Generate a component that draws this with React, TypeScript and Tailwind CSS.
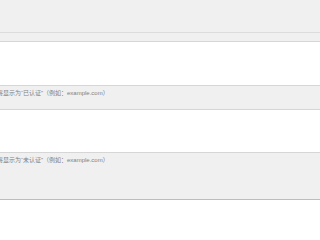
import React from 'react';

const hintFont = { fontFamily: '"Liberation Sans", "Noto Sans CJK SC", sans-serif' };

const Hint: React.FC<{ text: string }> = ({ text }) => (
  <p className="ml-[-3px] whitespace-nowrap pt-[3px] text-[6px] leading-[8px] text-[#808080]" style={hintFont}>
    {text}
  </p>
);

const App: React.FC = () => {
  return (
    <div className="flex h-[200px] w-full flex-col overflow-hidden bg-[#f0f0f0]">
      {/* top bar */}
      <div className="h-[32px] shrink-0" />
      <div className="h-[9px] shrink-0 border-t border-[#dcdcdc]" />

      {/* verified list */}
      <textarea
        className="block h-[45px] w-full shrink-0 resize-none border-y border-[#d6d6d6] bg-white outline-none"
        defaultValue=""
      />
      <div className="h-[23px] shrink-0">
        <Hint text="将显示为“已认证”（例如：example.com）" />
      </div>

      {/* unverified list */}
      <textarea
        className="block h-[44px] w-full shrink-0 resize-none border-y border-[#d6d6d6] bg-white outline-none"
        defaultValue=""
      />
      <div className="h-[46px] shrink-0">
        <Hint text="将显示为“未认证”（例如：example.com）" />
      </div>
      <div className="h-px shrink-0 bg-[#bdbdbd]" />
    </div>
  );
};

export default App;
